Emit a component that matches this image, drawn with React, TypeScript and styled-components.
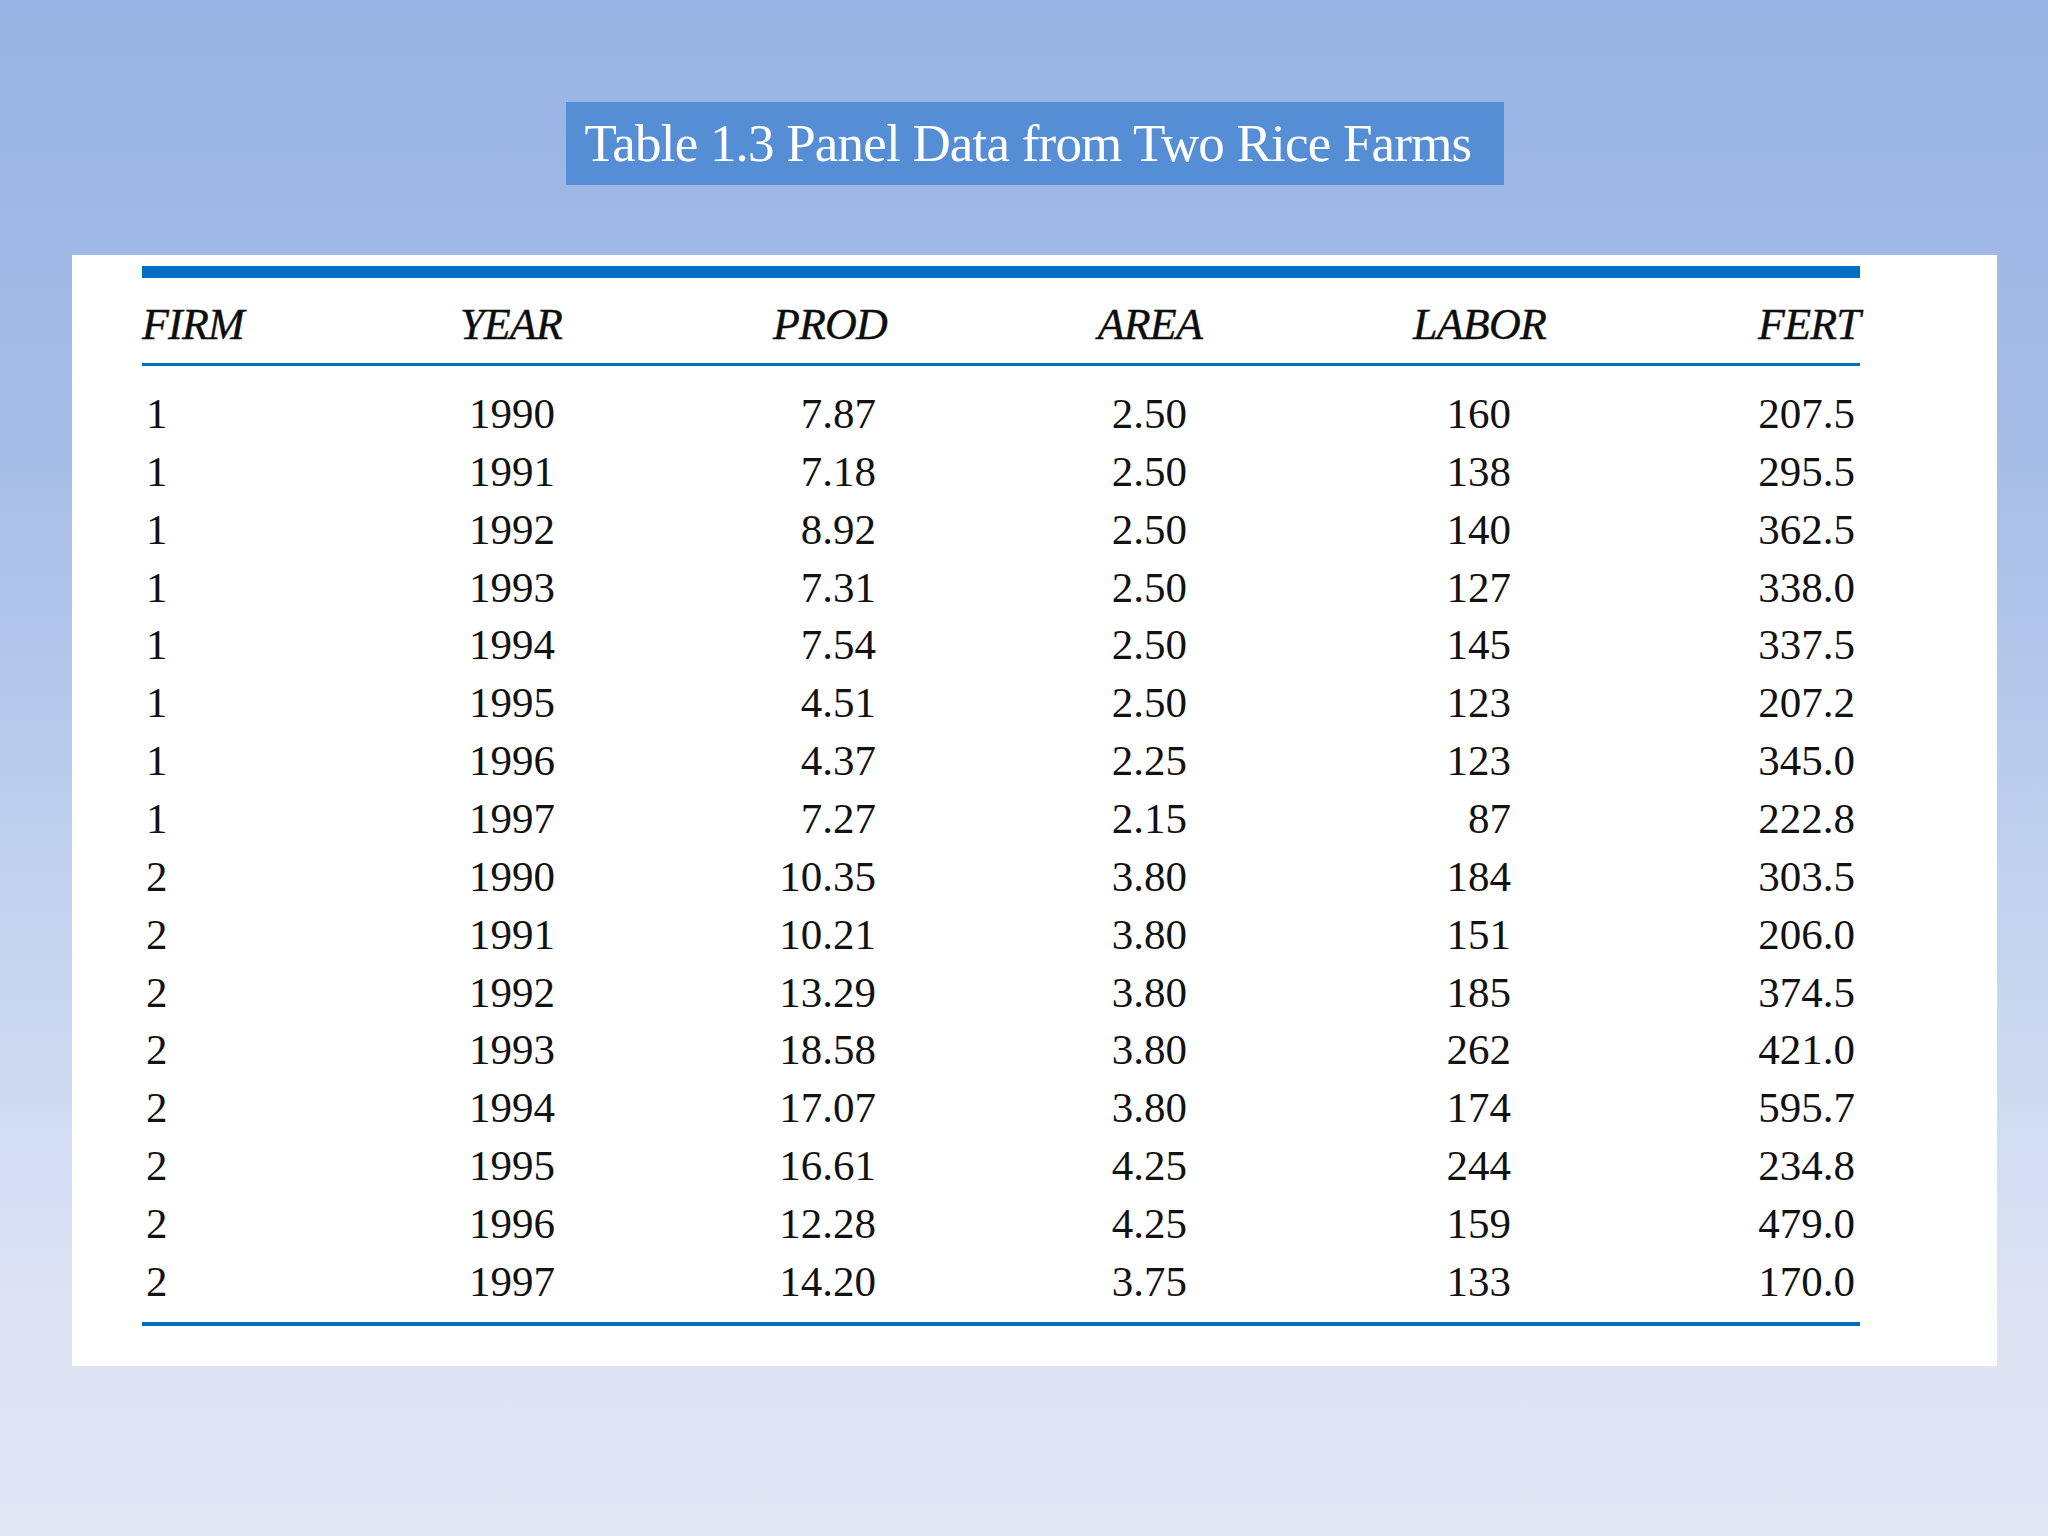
import styled, { createGlobalStyle } from 'styled-components';

const GlobalStyle = createGlobalStyle`
html, body {
  margin: 0;
  padding: 0;
}

body {
  font-family: "Liberation Serif", "Times New Roman", serif;
}
`;

const PageStyle = styled.div`
min-height: 1536px;
padding: 102px 0 0 72px;
box-sizing: border-box;
background: linear-gradient(180deg, #98b3e3 0%, #a6bde7 30%, #c4d3ef 60%, #dde3f4 85%, #e1e6f5 100%);
`;

const TitleRowStyle = styled.div`
display: flex;
justify-content: center;
width: 1925px;
`;

const TitleStyle = styled.h1`
display: flex;
align-items: center;
width: 938px;
height: 83px;
margin: 0;
padding: 0 0 2px 19px;
box-sizing: border-box;
background: #558ed5;
color: #ffffff;
font-family: "Liberation Serif", "Times New Roman", serif;
font-size: 53px;
font-weight: 400;
letter-spacing: -0.8px;
white-space: nowrap;
`;

const PanelStyle = styled.div`
width: 1925px;
margin-top: 70px;
padding: 11px 137px 40px 70px;
box-sizing: border-box;
background: #ffffff;
`;

const COLUMNS = '258px 162px 325px 315px 344px 314px';

const TableHeadStyle = styled.div`
display: grid;
grid-template-columns: ${COLUMNS};
padding-top: 8px;
border-top: 12px solid #0070c0;
border-bottom: 3px solid #0070c0;
`;

const TableBodyStyle = styled.div`
padding: 19px 0 11px;
border-bottom: 4px solid #0070c0;
`;

const RowStyle = styled.div`
display: grid;
grid-template-columns: ${COLUMNS};
height: 57.87px;
`;

const HeadCellStyle = styled.div<{ $left?: boolean }>`
font-size: 44px;
font-style: italic;
line-height: 77px;
letter-spacing: -0.8px;
color: #0e0e0e;
-webkit-text-stroke: 0.4px #0e0e0e;
text-align: ${({ $left }) => ($left ? 'left' : 'right')};
`;

const DataCellStyle = styled.div<{ $left?: boolean; $pad: number }>`
padding-left: ${({ $left }) => ($left ? 4 : 0)}px;
padding-right: ${({ $pad }) => $pad}px;
font-size: 43px;
line-height: 57.87px;
color: #121212;
text-align: ${({ $left }) => ($left ? 'left' : 'right')};
`;

const headers = ['FIRM', 'YEAR', 'PROD', 'AREA', 'LABOR', 'FERT'];
const pads = [0, 7, 11, 15, 35, 5];

const rows = [
  ['1', '1990', '7.87', '2.50', '160', '207.5'],
  ['1', '1991', '7.18', '2.50', '138', '295.5'],
  ['1', '1992', '8.92', '2.50', '140', '362.5'],
  ['1', '1993', '7.31', '2.50', '127', '338.0'],
  ['1', '1994', '7.54', '2.50', '145', '337.5'],
  ['1', '1995', '4.51', '2.50', '123', '207.2'],
  ['1', '1996', '4.37', '2.25', '123', '345.0'],
  ['1', '1997', '7.27', '2.15', '87', '222.8'],
  ['2', '1990', '10.35', '3.80', '184', '303.5'],
  ['2', '1991', '10.21', '3.80', '151', '206.0'],
  ['2', '1992', '13.29', '3.80', '185', '374.5'],
  ['2', '1993', '18.58', '3.80', '262', '421.0'],
  ['2', '1994', '17.07', '3.80', '174', '595.7'],
  ['2', '1995', '16.61', '4.25', '244', '234.8'],
  ['2', '1996', '12.28', '4.25', '159', '479.0'],
  ['2', '1997', '14.20', '3.75', '133', '170.0'],
];

const App = () => (
  <>
    <GlobalStyle />
    <PageStyle>
      <TitleRowStyle>
        <TitleStyle>Table 1.3 Panel Data from Two Rice Farms</TitleStyle>
      </TitleRowStyle>
      <PanelStyle>
        <TableHeadStyle>
          {headers.map((h, i) => (
            <HeadCellStyle key={h} $left={i === 0}>
              {h}
            </HeadCellStyle>
          ))}
        </TableHeadStyle>
        <TableBodyStyle>
          {rows.map((row, r) => (
            <RowStyle key={r}>
              {row.map((value, i) => (
                <DataCellStyle key={i} $left={i === 0} $pad={pads[i]}>
                  {value}
                </DataCellStyle>
              ))}
            </RowStyle>
          ))}
        </TableBodyStyle>
      </PanelStyle>
    </PageStyle>
  </>
);

export default App;
